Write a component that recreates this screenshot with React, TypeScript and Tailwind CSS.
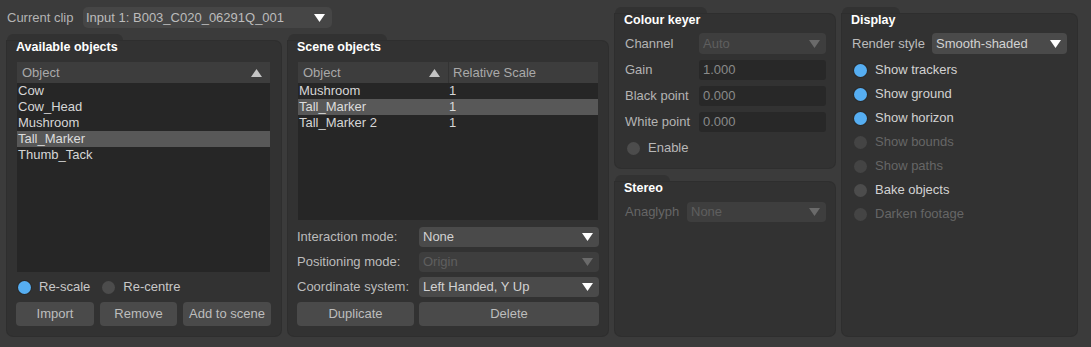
import React from "react";

function Tri({ up = false, className = "" }: { up?: boolean; className?: string }) {
  return (
    <svg width="11" height="8" viewBox="0 0 11 8" className={className}>
      {up ? <polygon points="0,8 11,8 5.5,0" fill="currentColor" /> : <polygon points="0,0 11,0 5.5,8" fill="currentColor" />}
    </svg>
  );
}

function Dropdown({
  value,
  disabled = false,
  className = "",
}: {
  value: string;
  disabled?: boolean;
  className?: string;
}) {
  return (
    <div
      className={`flex items-center justify-between rounded-[4px] pl-[4px] pr-[6px] ${
        disabled ? "bg-[#3e3e3e] text-[#5f5f5f]" : "bg-[#4a4a4a] text-[#d2d2d2]"
      } ${className}`}
    >
      <span className="truncate">{value}</span>
      <Tri className={disabled ? "text-[#6a6a6a]" : "text-white"} />
    </div>
  );
}

function Radio({ on = false, disabled = false, className = "" }: { on?: boolean; disabled?: boolean; className?: string }) {
  return (
    <span
      className={`block w-[13px] h-[13px] rounded-full shrink-0 ${
        on ? "bg-[#56aef2] shadow-[0_0_0_1px_#2a2a2a]" : disabled ? "bg-[#444444]" : "bg-[#4c4c4c]"
      } ${className}`}
    />
  );
}

function Panel({
  title,
  tab,
  className = "",
  bodyClass = "",
  children,
}: {
  title: string;
  tab: string;
  className?: string;
  bodyClass?: string;
  children?: React.ReactNode;
}) {
  return (
    <div className={`flex flex-col ${className}`}>
      <div className={`h-[7px] bg-[#323232] rounded-t-[6px] shrink-0 ${tab}`} />
      <div className={`flex-1 flex flex-col bg-[#323232] rounded-b-[6px] rounded-tr-[6px] shadow-[0_0_0_1px_#2e2e2e] ${bodyClass}`}>
        <div className="text-[12.5px] font-bold leading-[13px] text-white ml-[-1px]">{title}</div>
        {children}
      </div>
    </div>
  );
}

function Button({ label, className = "" }: { label: string; className?: string }) {
  return (
    <div className={`h-[24px] flex items-center justify-center rounded-[4px] bg-[#4a4a4a] text-[#bdbdbd] ${className}`}>
      {label}
    </div>
  );
}

export default function App() {
  const available = ["Cow", "Cow_Head", "Mushroom", "Tall_Marker", "Thumb_Tack"];
  const scene = ["Mushroom", "Tall_Marker", "Tall_Marker 2"];
  const displayOpts: { label: string; on?: boolean; disabled?: boolean }[] = [
    { label: "Show trackers", on: true },
    { label: "Show ground", on: true },
    { label: "Show horizon", on: true },
    { label: "Show bounds", disabled: true },
    { label: "Show paths", disabled: true },
    { label: "Bake objects" },
    { label: "Darken footage", disabled: true },
  ];
  return (
    <div
      className="w-[1091px] h-[347px] bg-[#3b3b3b] flex gap-[7px] pl-[7px] pt-[7px] text-[13px] text-[#cfcfcf] overflow-hidden"
      style={{ fontFamily: '"Liberation Sans", Arial, sans-serif' }}
    >
      {/* Left column */}
      <div className="w-[601px] h-[329px] flex flex-col gap-[6px]">
        <div className="h-[21px] flex items-center">
          <span className="text-[#b4b4b4] w-[76px]">Current clip</span>
          <div className="w-[249px] h-[21px] flex items-center justify-between rounded-[5px] bg-[#464646] pl-[3px] pr-[7px] text-[#bcbcbc]">
            <span>Input 1: B003_C020_06291Q_001</span>
            <Tri className="text-white" />
          </div>
        </div>
        <div className="flex-1 flex gap-[7px]">
          <Panel title="Available objects" tab="w-[116px]" className="w-[274px]" bodyClass="pl-[10px] pr-[11px] pb-[10px]">
            <div className="mt-[8px] flex-1 flex flex-col bg-[#262626]">
              <div className="h-[21px] bg-[#3d3d3d] flex items-center justify-between pl-[5px] pr-[8px] text-[#a9a9a9]">
                <span>Object</span>
                <Tri up className="text-[#c4c4c4]" />
              </div>
              {available.map((n) => (
                <div
                  key={n}
                  className={`h-[16px] leading-[16px] pl-[1px] ${n === "Tall_Marker" ? "bg-[#585858] text-[#dcdcdc]" : "text-[#d6d6d6]"}`}
                >
                  {n}
                </div>
              ))}
            </div>
            <div className="mt-[7px] h-[16px] flex items-center pl-[1px]">
              <Radio on />
              <span className="ml-[8px] text-[#c8c8c8]">Re-scale</span>
              <Radio className="ml-[12px]" />
              <span className="ml-[8px] text-[#c8c8c8]">Re-centre</span>
            </div>
            <div className="mt-[7px] flex gap-[6px] -mx-[1px]">
              <Button label="Import" className="w-[78px]" />
              <Button label="Remove" className="w-[77px]" />
              <Button label="Add to scene" className="flex-1" />
            </div>
          </Panel>
          <Panel title="Scene objects" tab="w-[99px]" className="w-[320px]" bodyClass="pl-[10px] pr-[10px] pb-[10px]">
            <div className="mt-[8px] flex-1 flex flex-col bg-[#262626]">
              <div className="h-[21px] bg-[#3d3d3d] flex items-center text-[#a9a9a9]">
                <div className="w-[151px] h-full flex items-center justify-between pl-[5px] pr-[8px] border-r border-[#333333]">
                  <span>Object</span>
                  <Tri up className="text-[#c4c4c4]" />
                </div>
                <span className="pl-[4px]">Relative Scale</span>
              </div>
              {scene.map((n) => (
                <div
                  key={n}
                  className={`h-[16px] leading-[16px] flex ${n === "Tall_Marker" ? "bg-[#585858] text-[#dcdcdc]" : "text-[#d6d6d6]"}`}
                >
                  <span className="w-[151px] pl-[1px]">{n}</span>
                  <span>1</span>
                </div>
              ))}
            </div>
            <div className="mt-[7px] flex flex-col gap-[5px]">
              <div className="h-[20px] flex items-center justify-between">
                <span className="text-[#bcbcbc] ml-[-1px]">Interaction mode:</span>
                <Dropdown value="None" className="w-[180px] h-[20px] mr-[-1px]" />
              </div>
              <div className="h-[20px] flex items-center justify-between">
                <span className="text-[#bcbcbc] ml-[-1px]">Positioning mode:</span>
                <Dropdown value="Origin" disabled className="w-[180px] h-[20px] mr-[-1px]" />
              </div>
              <div className="h-[20px] flex items-center justify-between">
                <span className="text-[#bcbcbc] ml-[-1px]">Coordinate system:</span>
                <Dropdown value="Left Handed, Y Up" className="w-[180px] h-[20px] mr-[-1px]" />
              </div>
              <div className="flex gap-[5px] -ml-[1px] -mr-[1px]">
                <Button label="Duplicate" className="w-[117px]" />
                <Button label="Delete" className="flex-1" />
              </div>
            </div>
          </Panel>
        </div>
      </div>

      {/* Middle column */}
      <div className="w-[220px] h-[329px] flex flex-col gap-[7px]">
        <Panel title="Colour keyer" tab="w-[92px]" className="h-[161px]" bodyClass="px-[10px]">
          <div className="mt-[6px] flex flex-col gap-[5px]">
            <div className="h-[21px] flex items-center justify-between">
              <span className="text-[#b4b4b4]">Channel</span>
              <Dropdown value="Auto" disabled className="w-[127px] h-[21px] mr-[-1px]" />
            </div>
            {[
              ["Gain", "1.000"],
              ["Black point", "0.000"],
              ["White point", "0.000"],
            ].map(([l, v]) => (
              <div key={l} className="h-[21px] flex items-center justify-between">
                <span className="text-[#b4b4b4]">{l}</span>
                <div className="w-[127px] h-[20px] mr-[-1px] rounded-[3px] bg-[#282828] pl-[4px] flex items-center text-[#8a8a8a]">
                  {v}
                </div>
              </div>
            ))}
          </div>
          <div className="mt-[8px] h-[16px] flex items-center ml-[2px]">
            <Radio />
            <span className="ml-[8px] text-[#b8b8b8]">Enable</span>
          </div>
        </Panel>
        <Panel title="Stereo" tab="w-[55px]" className="h-[161px]" bodyClass="px-[10px]">
          <div className="mt-[7px] h-[20px] flex items-center justify-between">
            <span className="text-[#666666]">Anaglyph</span>
            <Dropdown value="None" disabled className="w-[139px] h-[20px] mr-[-1px]" />
          </div>
        </Panel>
      </div>

      {/* Right column */}
      <div className="w-[235px] h-[329px] flex flex-col">
        <Panel title="Display" tab="w-[58px]" className="h-[329px]" bodyClass="pl-[10px] pr-[10px]">
          <div className="mt-[6px] h-[21px] flex items-center justify-between">
            <span className="text-[#bcbcbc]">Render style</span>
            <Dropdown value="Smooth-shaded" className="w-[135px] h-[21px]" />
          </div>
          <div className="mt-[4px] flex flex-col">
            {displayOpts.map((o) => (
              <div key={o.label} className="h-[24px] flex items-center ml-[2px]">
                <Radio on={o.on} disabled={o.disabled} />
                <span className={`ml-[8px] ${o.disabled ? "text-[#666666]" : "text-[#d2d2d2]"}`}>{o.label}</span>
              </div>
            ))}
          </div>
        </Panel>
      </div>
    </div>
  );
}
